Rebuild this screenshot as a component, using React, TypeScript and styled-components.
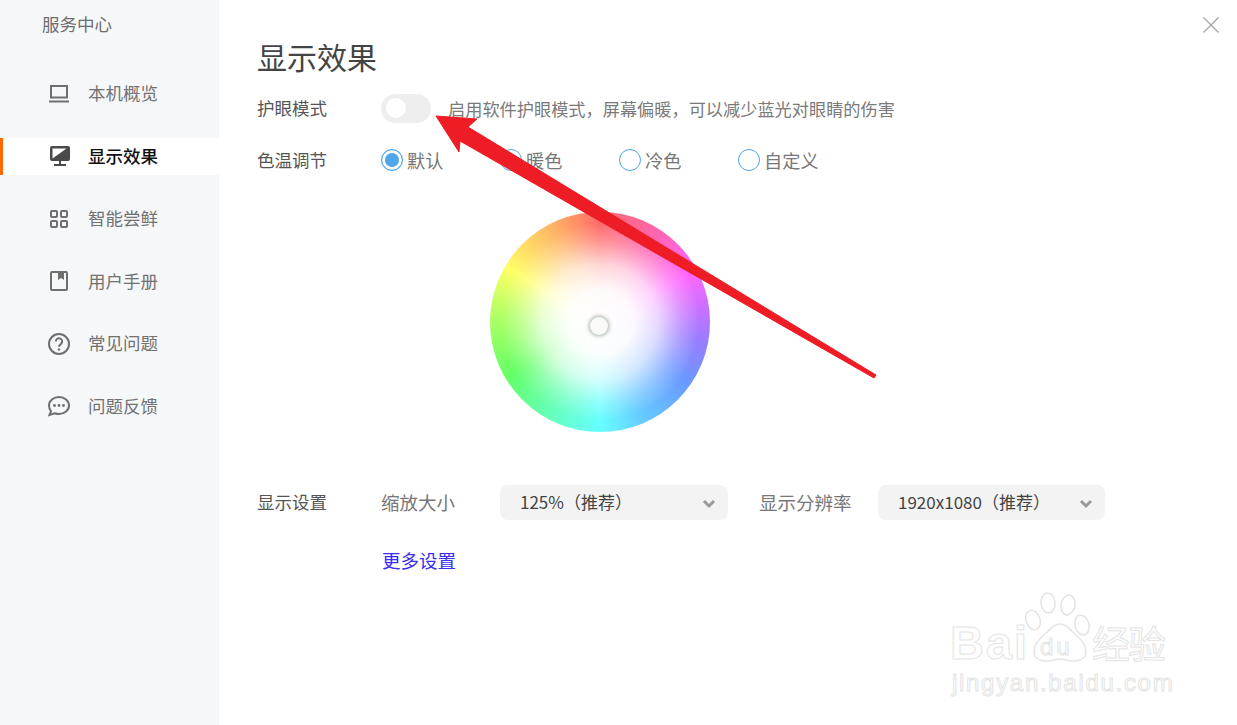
import React from "react";
import styled, { createGlobalStyle } from "styled-components";

const GlobalStyle = createGlobalStyle`
  html, body {
    margin: 0;
    padding: 0;
    background: #fff;
  }
  body {
    font-family: "Noto Sans CJK SC", "Noto Sans", sans-serif;
  }
`;

const Window = styled.div`
  position: relative;
  width: 1237px;
  height: 725px;
  display: flex;
  overflow: hidden;
  background: #fff;
`;

const Sidebar = styled.aside`
  width: 219px;
  flex-shrink: 0;
  background: #f6f7f9;
  display: flex;
  flex-direction: column;
`;

const SideTitle = styled.div`
  height: 50px;
  padding-left: 42px;
  font-size: 17.5px;
  line-height: 47px;
  color: #6e6e6e;
`;

const NavList = styled.nav`
  display: flex;
  flex-direction: column;
  padding-top: 25px;
  gap: 25.6px;
`;

const NavItem = styled.div<{ $active?: boolean }>`
  height: 37px;
  display: flex;
  align-items: center;
  padding-left: ${(p) => (p.$active ? "45px" : "48px")};
  gap: 18px;
  font-size: 17.5px;
  color: ${(p) => (p.$active ? "#111" : "#727272")};
  font-weight: ${(p) => (p.$active ? 500 : 400)};
  background: ${(p) => (p.$active ? "#fff" : "transparent")};
  border-left: ${(p) => (p.$active ? "3px solid #ff6a00" : "none")};
`;

const NavLabel = styled.span`
  padding-bottom: 2px;
`;

const NavIcon = styled.svg`
  width: 22px;
  height: 24px;
  flex-shrink: 0;
`;

const Main = styled.main`
  flex: 1;
  padding: 35px 0 0 38px;
  display: flex;
  flex-direction: column;
`;

const PageTitle = styled.h1`
  margin: 0;
  height: 44px;
  font-size: 30px;
  line-height: 43px;
  font-weight: 400;
  color: #444;
`;

const Row = styled.div`
  display: flex;
  align-items: center;
  height: 30px;
`;

const ToggleRow = styled(Row)`
  margin-top: 14px;
`;

const RadioRow = styled(Row)`
  margin-top: 22px;
`;

const RowLabel = styled.div`
  width: 124px;
  flex-shrink: 0;
  padding-bottom: 2px;
  font-size: 17.5px;
  color: #555;
`;

const Toggle = styled.div`
  width: 50px;
  height: 29px;
  border-radius: 15px;
  background: #eeeeee;
  display: flex;
  align-items: center;
  padding-left: 5px;
  box-sizing: border-box;
`;

const Knob = styled.div`
  width: 20px;
  height: 20px;
  border-radius: 50%;
  background: #fff;
`;

const Hint = styled.div`
  margin-left: 17px;
  font-size: 17.2px;
  color: #7a7a7a;
  white-space: nowrap;
`;

const RadioOption = styled.div`
  width: 119px;
  display: flex;
  align-items: center;
  gap: 4px;
  font-size: 18.2px;
  color: #777;
`;

const RadioCircle = styled.span<{ $checked?: boolean }>`
  width: 22px;
  height: 22px;
  box-sizing: border-box;
  border-radius: 50%;
  border: 1.5px solid #4fa6e8;
  background: ${(p) => (p.$checked ? "#4fa6e8" : "#fff")};
  box-shadow: ${(p) => (p.$checked ? "inset 0 0 0 3px #fff" : "none")};
`;

const WheelWrap = styled.div`
  margin: 37px 0 0 233px;
  position: relative;
  width: 220px;
  height: 220px;
`;

const Wheel = styled.div`
  width: 100%;
  height: 100%;
  border-radius: 50%;
  background:
    radial-gradient(circle closest-side, #fff 0%, rgba(255, 255, 255, 0.96) 30%, rgba(255, 255, 255, 0.72) 52%, rgba(255, 255, 255, 0.25) 74%, rgba(255, 255, 255, 0) 90%),
    conic-gradient(#ff6a6a 0deg, #ff66aa 30deg, #ff66ff 62deg, #9a7cff 100deg, #6a9aff 125deg, #66c8ff 155deg, #66ffff 180deg, #66ffaa 215deg, #66ff66 240deg, #b4ff66 275deg, #ffff66 300deg, #ffb066 335deg, #ff6a6a 360deg);
`;

const WheelPointer = styled.div`
  position: absolute;
  left: 100px;
  top: 105px;
  width: 18px;
  height: 18px;
  border-radius: 50%;
  background: #fafaf8;
  box-shadow: 0 0 4px 1px #a0aaa0;
`;

const SettingsRow = styled(Row)`
  margin-top: 53px;
  height: 35px;
`;

const SettingLabel = styled.div<{ $width: number }>`
  width: ${(p) => p.$width}px;
  flex-shrink: 0;
  padding-bottom: 2px;
  font-size: 18.5px;
  color: #777;
`;

const Select = styled.div<{ $width: number; $after?: number }>`
  width: ${(p) => p.$width}px;
  margin-right: ${(p) => p.$after ?? 0}px;
  height: 35px;
  box-sizing: border-box;
  padding: 0 12px 2px 20px;
  border-radius: 8px;
  background: #f3f3f3;
  display: flex;
  align-items: center;
  justify-content: space-between;
  font-size: 17px;
  color: #444;
`;

const SelectArrow = styled.svg`
  width: 14px;
  height: 10px;
  margin-top: 5px;
`;

const MoreLink = styled.a`
  margin: 27px 0 0 125px;
  font-size: 18.5px;
  line-height: 26px;
  color: #3a2cf0;
  text-decoration: none;
`;

const CloseButton = styled.svg`
  position: absolute;
  left: 1202px;
  top: 16px;
  width: 18px;
  height: 18px;
`;

const ArrowOverlay = styled.svg`
  position: absolute;
  left: 0;
  top: 0;
  width: 1237px;
  height: 725px;
  pointer-events: none;
`;

const Watermark = styled.div`
  position: absolute;
  left: 948px;
  top: 590px;
  width: 230px;
  height: 110px;
  color: #fff;
  -webkit-text-stroke: 1px #e4e4e4;
  font-family: "Liberation Sans", sans-serif;
`;

const MarkBai = styled.span`
  position: absolute;
  left: 2px;
  top: 31px;
  font-size: 47px;
  line-height: 44px;
  font-weight: 700;
  letter-spacing: 2px;
`;

const MarkDu = styled.span`
  position: absolute;
  left: 92px;
  top: 44px;
  font-size: 24px;
  line-height: 26px;
  letter-spacing: 3px;
`;

const MarkJing = styled.span`
  position: absolute;
  left: 144px;
  top: 33px;
  font-family: "Noto Sans CJK SC", sans-serif;
  font-size: 38px;
  line-height: 38px;
  letter-spacing: -2px;
  white-space: nowrap;
`;

const MarkUrl = styled.span`
  position: absolute;
  left: 4px;
  top: 81px;
  font-size: 24px;
  line-height: 24px;
  letter-spacing: 1.7px;
  white-space: nowrap;
`;

const PawSvg = styled.svg`
  position: absolute;
  left: 0;
  top: 0;
  width: 230px;
  height: 110px;
`;

const stroke = { fill: "none", stroke: "#6f6f6f", strokeWidth: 2 };

const navItems: { label: string; active?: boolean; icon: React.ReactNode }[] = [
  {
    label: "本机概览",
    icon: (
      <>
        <rect x="3" y="4" width="16" height="11.500" {...stroke} />
        <path d="M1 19.500h20" {...stroke} />
      </>
    ),
  },
  {
    label: "显示效果",
    active: true,
    icon: (
      <>
        <rect x="2" y="2" width="20" height="15" rx="2" fill="#4a4a4a" />
        <path d="M4.500 4.500h14l-14 10z" fill="#fff" />
        <path d="M12 17v3M6 21h12" fill="none" stroke="#4a4a4a" strokeWidth="2" />
      </>
    ),
  },
  {
    label: "智能尝鲜",
    icon: (
      <>
        <rect x="3" y="4" width="6" height="6" rx="1" {...stroke} />
        <rect x="13" y="4" width="6" height="6" rx="1" {...stroke} />
        <rect x="3" y="14" width="6" height="6" rx="1" {...stroke} />
        <rect x="13" y="14" width="6" height="6" rx="1" {...stroke} />
      </>
    ),
  },
  {
    label: "用户手册",
    icon: (
      <>
        <rect x="3" y="3" width="16" height="18" rx="1" {...stroke} />
        <path d="M10 3h6v8l-3-2-3 2z" fill="#6f6f6f" />
      </>
    ),
  },
  {
    label: "常见问题",
    icon: (
      <>
        <circle cx="11" cy="12" r="10" {...stroke} />
        <path d="M7.800 9.500a3.200 3.200 0 1 1 5 2.600c-1.200.8-1.800 1.300-1.800 2.700" {...stroke} />
        <circle cx="11" cy="17.500" r="1.200" fill="#6f6f6f" />
      </>
    ),
  },
  {
    label: "问题反馈",
    icon: (
      <>
        <path d="M11 3c5.500 0 10 3.700 10 8.500S16.500 20 11 20c-1.500 0-3-.3-4.300-.8L1.500 21l1.500-3.800C1.700 15.700 1 13.700 1 11.500 1 6.700 5.500 3 11 3z" {...stroke} />
        <circle cx="6.500" cy="11.500" r="1.400" fill="#6f6f6f" />
        <circle cx="11" cy="11.500" r="1.400" fill="#6f6f6f" />
        <circle cx="15.500" cy="11.500" r="1.400" fill="#6f6f6f" />
      </>
    ),
  },
];

const radios = [
  { label: "默认", checked: true },
  { label: "暖色" },
  { label: "冷色" },
  { label: "自定义" },
];

const ChevronDown = () => (
  <SelectArrow viewBox="0 0 14 10">
    <path d="M2 2l5 5 5-5" fill="none" stroke="#9a9a9a" strokeWidth="3" />
  </SelectArrow>
);

export default function App() {
  return (
    <Window>
      <GlobalStyle />
      <Sidebar>
        <SideTitle>服务中心</SideTitle>
        <NavList>
          {navItems.map((item) => (
            <NavItem key={item.label} $active={item.active}>
              <NavIcon viewBox="0 0 22 24">{item.icon}</NavIcon>
              <NavLabel>{item.label}</NavLabel>
            </NavItem>
          ))}
        </NavList>
      </Sidebar>

      <Main>
        <PageTitle>显示效果</PageTitle>
        <ToggleRow>
          <RowLabel>护眼模式</RowLabel>
          <Toggle>
            <Knob />
          </Toggle>
          <Hint>启用软件护眼模式，屏幕偏暖，可以减少蓝光对眼睛的伤害</Hint>
        </ToggleRow>
        <RadioRow>
          <RowLabel>色温调节</RowLabel>
          {radios.map((r) => (
            <RadioOption key={r.label}>
              <RadioCircle $checked={r.checked} />
              {r.label}
            </RadioOption>
          ))}
        </RadioRow>
        <WheelWrap>
          <Wheel />
          <WheelPointer />
        </WheelWrap>
        <SettingsRow>
          <RowLabel>显示设置</RowLabel>
          <SettingLabel $width={119}>缩放大小</SettingLabel>
          <Select $width={228} $after={31}>
            125%（推荐）
            <ChevronDown />
          </Select>
          <SettingLabel $width={119}>显示分辨率</SettingLabel>
          <Select $width={227}>
            1920x1080（推荐）
            <ChevronDown />
          </Select>
        </SettingsRow>
        <MoreLink href="#">更多设置</MoreLink>
      </Main>

      <CloseButton viewBox="0 0 18 18">
        <path d="M1.500 1.500l15 15M16.500 1.500l-15 15" fill="none" stroke="#a8a8a8" strokeWidth="1.400" />
      </CloseButton>

      <Watermark>
        <PawSvg viewBox="0 0 230 110">
          <g fill="#fff" stroke="#e4e4e4" strokeWidth="1.500">
            <ellipse cx="100" cy="13" rx="7" ry="10" transform="rotate(-5 100 13)" />
            <ellipse cx="120" cy="15" rx="7" ry="10" transform="rotate(10 120 15)" />
            <ellipse cx="85" cy="30" rx="7" ry="10" transform="rotate(-20 85 30)" />
            <ellipse cx="134" cy="35" rx="7" ry="10" transform="rotate(-15 134 35)" />
            <path d="M112 34c7 0 10 6 15 10 6 5 11 10 11 17 0 7-6 10-13 10-5 0-9-2-13-2s-8 2-13 2c-7 0-13-3-13-10 0-7 5-12 11-17 5-4 8-10 15-10z" />
          </g>
        </PawSvg>
        <MarkBai>Bai</MarkBai>
        <MarkDu>du</MarkDu>
        <MarkJing>经验</MarkJing>
        <MarkUrl>jingyan.baidu.com</MarkUrl>
      </Watermark>

      <ArrowOverlay viewBox="0 0 1237 725">
        <path d="M436 116L477 119L468 127L876 375L874 378L460 141L459 152Z" fill="#ee1c25" stroke="#ee1c25" strokeLinejoin="round" />
      </ArrowOverlay>
    </Window>
  );
}
